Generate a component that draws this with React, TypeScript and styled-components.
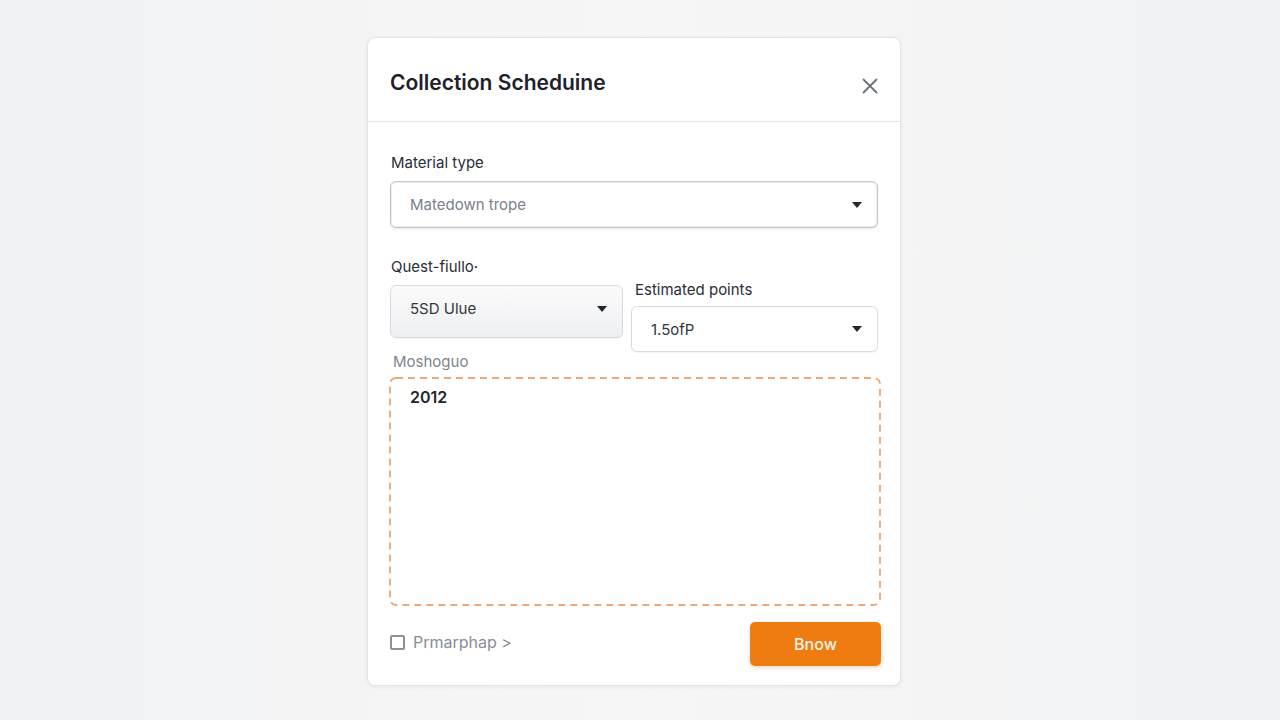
import React from "react";
import styled, { createGlobalStyle } from "styled-components";

const Global = createGlobalStyle`
  html, body { margin: 0; padding: 0; background: #f3f4f5; }
  body { font-family: Inter, "Noto Sans", sans-serif; }
  * { box-sizing: border-box; }
`;

const Page = styled.div`
  width: 1280px;
  height: 720px;
  padding: 37px 0 0 367px;
  background: linear-gradient(90deg, #f1f2f3 0%, #f6f6f7 50%, #f1f2f3 100%);
`;

const Card = styled.div`
  width: 534px;
  height: 649px;
  background: #ffffff;
  border: 1px solid #e2e3e6;
  border-radius: 8px;
  box-shadow: 0 1px 4px rgba(20, 24, 40, 0.06);
  display: flex;
  flex-direction: column;
`;

const Header = styled.div`
  flex-shrink: 0;
  height: 84px;
  border-bottom: 1px solid #e4e5e8;
  display: flex;
  align-items: flex-start;
  justify-content: space-between;
  padding: 32px 19px 0 22px;
`;

const Title = styled.h1`
  margin: 0;
  font-size: 21px;
  line-height: 26px;
  font-weight: 600;
  color: #1e212b;
`;

const CloseButton = styled.button`
  border: none;
  background: none;
  padding: 0;
  width: 22px;
  height: 22px;
  margin-top: 5px;
  display: flex;
  align-items: center;
  justify-content: center;
  cursor: pointer;
`;

const Body = styled.div`
  flex: 1;
  display: flex;
  flex-direction: column;
  padding: 32px 22px 19px 22px;
`;

const Label = styled.label<{ $muted?: boolean; $space?: number; $indent?: number }>`
  display: block;
  font-size: 15px;
  line-height: 18px;
  color: ${(p) => (p.$muted ? "#80848e" : "#2a2d36")};
  margin-bottom: ${(p) => p.$space ?? 9}px;
  padding-left: ${(p) => p.$indent ?? 1}px;
`;

const Select = styled.div<{ $height: number; $variant?: "main" | "soft" | "plain" }>`
  height: ${(p) => p.$height}px;
  display: flex;
  align-items: center;
  justify-content: space-between;
  padding: 0 15px ${(p) => (p.$variant === "soft" ? "6px" : "0")} 19px;
  border-radius: 6px;
  font-size: 15px;
  border: 1px solid
    ${(p) => (p.$variant === "main" ? "#c6c7cf" : "#d9dadf")};
  background: ${(p) =>
    p.$variant === "soft"
      ? "linear-gradient(180deg, #fbfbfc 0%, #eeeff1 100%)"
      : "#ffffff"};
  box-shadow: ${(p) =>
    p.$variant === "main"
      ? "0 1px 2px rgba(30,34,50,0.10), inset 0 0 0 1px rgba(200,201,210,0.35)"
      : "0 1px 1px rgba(30,34,50,0.05)"};
`;

const SelectText = styled.span<{ $placeholder?: boolean }>`
  color: ${(p) => (p.$placeholder ? "#7b7f8b" : "#33363e")};
`;

const Field = styled.div<{ $gap?: number }>`
  margin-top: ${(p) => p.$gap ?? 0}px;
`;

const Row = styled.div`
  display: flex;
  align-items: flex-start;
  gap: 8px;
  margin-top: 30px;
`;

const Column = styled.div<{ $width: number; $offset?: number }>`
  width: ${(p) => p.$width}px;
  margin-top: ${(p) => p.$offset ?? 0}px;
`;

const dashed = encodeURIComponent(
  "<svg xmlns='http://www.w3.org/2000/svg' width='492' height='229'><rect x='1' y='1' width='490' height='227' rx='6' ry='6' fill='none' stroke='#eda878' stroke-width='1.8' stroke-dasharray='7 5'/></svg>"
);

const Notes = styled.div`
  height: 229px;
  margin: 0 -3px 0 -1px;
  border-radius: 6px;
  background: url("data:image/svg+xml,${dashed}") no-repeat;
  padding: 10px 21px;
  font-size: 16px;
  font-weight: 600;
  color: #22252d;
`;

const Footer = styled.div`
  display: flex;
  align-items: center;
  justify-content: space-between;
  margin-top: 16px;
  margin-right: -3px;
`;

const CheckRow = styled.div`
  display: flex;
  align-items: center;
  gap: 8px;
  color: #8a8d97;
  font-size: 16px;
  margin-top: -4px;
`;

const Box = styled.span`
  width: 15px;
  height: 15px;
  border: 2px solid #8e919a;
  border-radius: 2px;
  display: inline-block;
`;

const Primary = styled.button`
  width: 131px;
  height: 44px;
  border: none;
  border-radius: 5px;
  background: #ee7c10;
  color: #fff3e6;
  font-family: Inter, "Noto Sans", sans-serif;
  font-size: 16px;
  font-weight: 500;
  box-shadow: 0 2px 4px rgba(200, 100, 10, 0.25);
  cursor: pointer;
`;

const Caret = () => (
  <svg width="10" height="6" viewBox="0 0 10 6">
    <path d="M0 0 H10 L5 6 Z" fill="#23262d" />
  </svg>
);

const CloseIcon = () => (
  <svg width="16" height="16" viewBox="0 0 16 16">
    <path d="M1.5 1.5 L14.5 14.5 M14.5 1.5 L1.5 14.5" stroke="#6c707b" strokeWidth="1.8" strokeLinecap="round" />
  </svg>
);

export default function App() {
  return (
    <>
      <Global />
      <Page>
        <Card>
          <Header>
            <Title>Collection Scheduine</Title>
            <CloseButton aria-label="Close">
              <CloseIcon />
            </CloseButton>
          </Header>
          <Body>
            <Field>
              <Label>Material type</Label>
              <Select $height={47} $variant="main">
                <SelectText $placeholder>Matedown trope</SelectText>
                <Caret />
              </Select>
            </Field>
            <Row>
              <Column $width={233}>
                <Label>Quest-fiullo·</Label>
                <Select $height={53} $variant="soft">
                  <SelectText>5SD Ulue</SelectText>
                  <Caret />
                </Select>
              </Column>
              <Column $width={247} $offset={23}>
                <Label $space={7} $indent={4}>Estimated points</Label>
                <Select $height={46} $variant="plain">
                  <SelectText>1.5ofP</SelectText>
                  <Caret />
                </Select>
              </Column>
            </Row>
            <Field $gap={1}>
              <Label $muted $space={6} $indent={3}>Moshoguo</Label>
              <Notes>2012</Notes>
            </Field>
            <Footer>
              <CheckRow>
                <Box />
                <span>Prmarphap &gt;</span>
              </CheckRow>
              <Primary>Bnow</Primary>
            </Footer>
          </Body>
        </Card>
      </Page>
    </>
  );
}
